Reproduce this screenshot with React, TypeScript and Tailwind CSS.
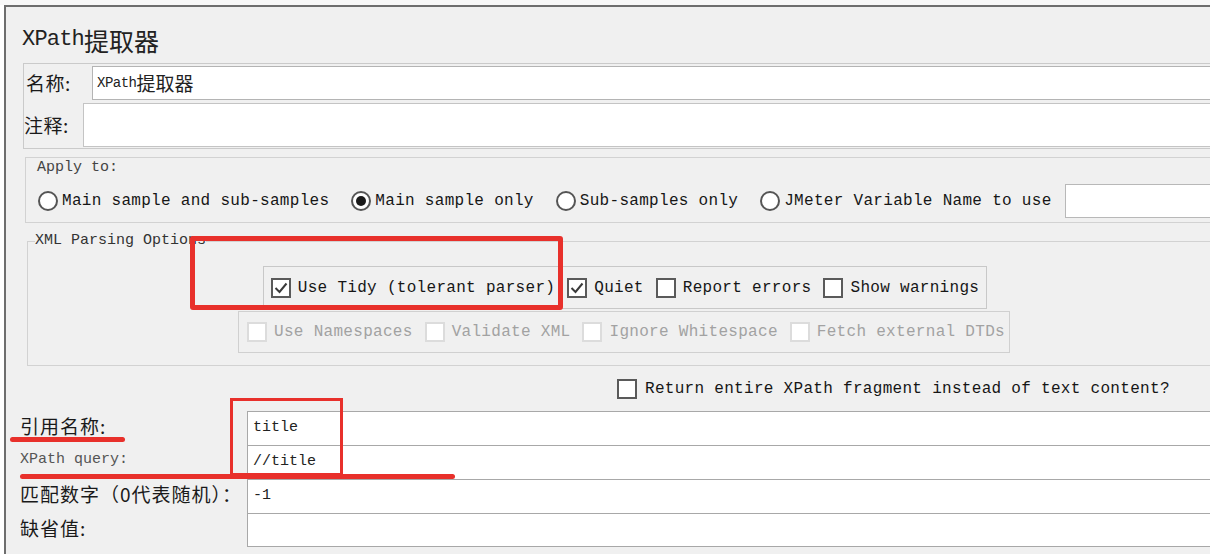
import React from 'react';

function Check({ checked = false, disabled = false }: { checked?: boolean; disabled?: boolean }) {
  return (
    <span
      className={`inline-flex w-[20px] h-[20px] shrink-0 items-center justify-center bg-white border-2 ${
        disabled ? 'border-[#dcdcdc]' : 'border-[#5a5a5a]'
      }`}
    >
      {checked && (
        <svg width="16" height="16" viewBox="0 0 16 16">
          <polyline points="2.5,8 6.5,12 13.5,3.5" fill="none" stroke="#3a3a3a" strokeWidth="2" />
        </svg>
      )}
    </span>
  );
}

function Radio({ selected = false }: { selected?: boolean }) {
  return (
    <span className="inline-flex w-[20px] h-[20px] shrink-0 items-center justify-center rounded-full bg-white border-2 border-[#555]">
      {selected && <span className="w-[10px] h-[10px] rounded-full bg-[#1a1a1a]" />}
    </span>
  );
}

const radios = [
  { label: 'Main sample and sub-samples', selected: false },
  { label: 'Main sample only', selected: true },
  { label: 'Sub-samples only', selected: false },
  { label: 'JMeter Variable Name to use', selected: false },
];

const tidyOptions = [
  { label: 'Use Tidy (tolerant parser)', checked: true },
  { label: 'Quiet', checked: true },
  { label: 'Report errors', checked: false },
  { label: 'Show warnings', checked: false },
];

const xmlOptions = ['Use Namespaces', 'Validate XML', 'Ignore Whitespace', 'Fetch external DTDs'];

const fields = [
  { label: '引用名称:', value: 'title', latin: false },
  { label: 'XPath query:', value: '//title', latin: true },
  { label: '匹配数字（0代表随机）：', value: '-1', latin: false },
  { label: '缺省值:', value: '', latin: false },
];

export default function App() {
  return (
    <div className="relative w-[1210px] h-[554px] overflow-hidden bg-white text-[#161616] font-['Liberation_Mono','Noto_Sans_CJK_SC',monospace]">
      <div className="h-[5px] bg-[#f8f8f8]" />
      <div className="ml-[4px] w-[1230px] h-[549px] border-l-2 border-t-2 border-[#6e6e6e] bg-[#f0f0f0]">
        {/* title */}
        <div className="mt-[19px] ml-[16px] h-[28px] flex items-end leading-[28px]">
          <span className="text-[22px] tracking-[-0.8px] text-[#222]">XPath</span>
          <span className="text-[25px] font-['Noto_Sans_CJK_SC',sans-serif] text-[#222]">提取器</span>
        </div>

        {/* name / comment */}
        <div className="mt-[9px] ml-[17px] w-[1220px] border border-[#cacaca] pt-[2px] pb-[1px] flex flex-col gap-[3px]">
          <div className="flex h-[34px]">
            <div className="w-[68px] pl-[2px] flex items-center text-[19px] tracking-[0.5px] font-['Noto_Sans_CJK_SC',sans-serif] text-[#1a1a1a]">
              名称:
            </div>
            <div className="flex-1 flex items-center bg-white border border-r-0 border-[#b4b4b4] pl-[4px]">
              <span className="text-[14px] tracking-[-0.5px] text-[#222]">XPath</span>
              <span className="text-[19px] font-['Noto_Sans_CJK_SC',sans-serif] text-[#222]">提取器</span>
            </div>
          </div>
          <div className="flex h-[44px]">
            <div className="w-[59px] flex items-center text-[19px] tracking-[0.5px] font-['Noto_Sans_CJK_SC',sans-serif] text-[#1a1a1a]">
              注释:
            </div>
            <div className="flex-1 bg-white border border-r-0 border-[#c4c4c4]" />
          </div>
        </div>

        {/* apply to */}
        <div className="mt-[8px] ml-[19px] w-[1220px] border border-[#d2d2d2] pt-[2px] pb-[4px] pl-[11px]">
          <div className="text-[15px] leading-[16px] text-[#444]">Apply to:</div>
          <div className="mt-[8px] h-[34px] flex items-center gap-[22px] pl-[1px]">
            {radios.map((r) => (
              <div key={r.label} className="flex items-center gap-[4px]">
                <Radio selected={r.selected} />
                <span className="text-[16px] tracking-[0.3px] whitespace-pre">{r.label}</span>
              </div>
            ))}
            <div className="-ml-[9px] h-[34px] flex-1 bg-white border border-[#b8b8b8]" />
          </div>
        </div>

        {/* xml parsing options */}
        <fieldset className="mt-[10px] ml-[21px] w-[1194px] border border-[#d2d2d2] pb-[12px] px-0">
          <legend className="ml-[7px] p-0 text-[15px] leading-[16px] text-[#333]">XML Parsing Options</legend>
          <div className="mt-[17px] flex flex-col items-center gap-[2px]">
            <div className="h-[43px] flex items-center gap-[12px] border border-[#c8c8c8] px-[7px] ml-[2px]">
              {tidyOptions.map((o) => (
                <div key={o.label} className="flex items-center gap-[7px]">
                  <Check checked={o.checked} />
                  <span className="text-[16px] tracking-[0.3px] whitespace-pre">{o.label}</span>
                </div>
              ))}
            </div>
            <div className="h-[42px] flex items-center gap-[12px] border border-[#d0d0d0] pl-[8px] pr-[4px]">
              {xmlOptions.map((o) => (
                <div key={o} className="flex items-center gap-[7px]">
                  <Check disabled />
                  <span className="text-[16px] tracking-[0.3px] whitespace-pre text-[#a2a2a2]">{o}</span>
                </div>
              ))}
            </div>
          </div>
        </fieldset>

        {/* return fragment */}
        <div className="h-[45px] flex items-center pl-[611px] gap-[8px]">
          <Check />
          <span className="text-[16px] tracking-[0.3px] whitespace-pre">
            Return entire XPath fragment instead of text content?
          </span>
        </div>

        {/* fields */}
        <div className="flex flex-col">
          {fields.map((f, i) => (
            <div key={f.label} className="flex h-[34px]">
              <div
                className={`w-[241px] pl-[14px] pb-[3px] flex items-center ${
                  f.latin
                    ? 'text-[15px] text-[#555]'
                    : "text-[19px] tracking-[1px] font-['Noto_Sans_CJK_SC',sans-serif] text-[#1a1a1a]"
                }`}
              >
                {f.label}
              </div>
              <div
                className={`flex-1 flex items-center bg-white border-t border-l border-[#a8a8a8] pl-[5px] text-[15px] text-[#222] ${
                  i === fields.length - 1 ? 'border-b' : ''
                }`}
              >
                {f.value}
              </div>
            </div>
          ))}
        </div>
      </div>

      {/* red annotations */}
      <div className="absolute left-[190px] top-[236px] w-[373px] h-[74px] border-[5px] border-[#e8302b] rounded-[3px]" />
      <div className="absolute left-[230px] top-[398px] w-[113px] h-[78px] border-[3px] border-[#e8302b]" />
      <div className="absolute left-[10px] top-[437px] w-[115px] h-[5px] rounded-full bg-[#e8302b]" />
      <div className="absolute left-[20px] top-[474px] w-[435px] h-[5px] rounded-full bg-[#e8302b]" />
    </div>
  );
}
